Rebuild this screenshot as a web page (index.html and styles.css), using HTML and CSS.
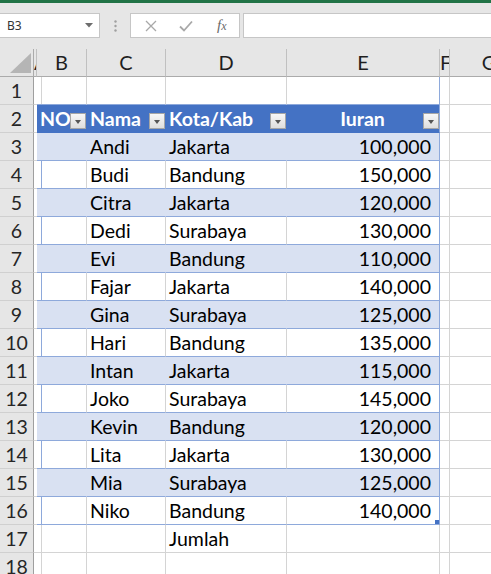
FILE: index.html
```html
<!DOCTYPE html>
<html lang="id">
<head>
    <meta charset="UTF-8">
    <title>Iuran</title>
    <link rel="stylesheet" href="styles.css">
</head>
<body>
    <div class="ribbon-edge"></div>

    <!-- formula bar -->
    <div class="fbar">
        <div class="namebox">
            <span>B3</span>
            <svg class="caret" width="8" height="5" viewBox="0 0 8 5"><path d="M0 0h8L4 4.5z" fill="#6d6d6d"/></svg>
        </div>
        <div class="grip">
            <svg width="3" height="12" viewBox="0 0 3 12"><circle cx="1.5" cy="1.5" r="1.2" fill="#a0a0a0"/><circle cx="1.5" cy="6" r="1.2" fill="#a0a0a0"/><circle cx="1.5" cy="10.5" r="1.2" fill="#a0a0a0"/></svg>
        </div>
        <div class="fxbox">
            <svg width="12" height="12" viewBox="0 0 12 12"><path d="M1 1l10 10M11 1L1 11" stroke="#a8a8a8" stroke-width="1.3" fill="none"/></svg>
            <svg width="14" height="12" viewBox="0 0 14 12"><path d="M1 6.5l4 4L13 1.5" stroke="#a8a8a8" stroke-width="1.8" fill="none"/></svg>
            <span class="fx"><i>f</i><i class="x">x</i></span>
        </div>
        <div class="formula"></div>
    </div>

    <div class="viewport">
    <div class="sheet">
        <div class="row colhdr">
            <div class="corner">
                <svg width="21" height="20" viewBox="0 0 21 20"><path d="M21 0V20H0z" fill="#b5b5b5"/></svg>
            </div>
            <div class="ch">A</div>
            <div class="ch">B</div>
            <div class="ch">C</div>
            <div class="ch">D</div>
            <div class="ch">E</div>
            <div class="ch">F</div>
            <div class="ch">G</div>
        </div>

        <div class="row above">
            <div class="rh">1</div><div class="c"></div>
            <div class="c t"></div><div class="c t"></div><div class="c t"></div><div class="c t last"></div>
            <div class="c"></div><div class="c"></div>
        </div>

        <div class="row head">
            <div class="rh">2</div><div class="c a"></div>
            <div class="c t">NO<span class="filter"></span></div>
            <div class="c t">Nama<span class="filter"></span></div>
            <div class="c t">Kota/Kab<span class="filter"></span></div>
            <div class="c t last mid">Iuran<span class="filter"></span></div>
            <div class="c"></div><div class="c"></div>
        </div>

        <div class="row band">
            <div class="rh">3</div><div class="c a"></div>
            <div class="c t"></div><div class="c t">Andi</div><div class="c t">Jakarta</div><div class="c t last num">100,000</div>
            <div class="c"></div><div class="c"></div>
        </div>
        <div class="row plain">
            <div class="rh">4</div><div class="c a"></div>
            <div class="c t"></div><div class="c t">Budi</div><div class="c t">Bandung</div><div class="c t last num">150,000</div>
            <div class="c"></div><div class="c"></div>
        </div>
        <div class="row band">
            <div class="rh">5</div><div class="c a"></div>
            <div class="c t"></div><div class="c t">Citra</div><div class="c t">Jakarta</div><div class="c t last num">120,000</div>
            <div class="c"></div><div class="c"></div>
        </div>
        <div class="row plain">
            <div class="rh">6</div><div class="c a"></div>
            <div class="c t"></div><div class="c t">Dedi</div><div class="c t">Surabaya</div><div class="c t last num">130,000</div>
            <div class="c"></div><div class="c"></div>
        </div>
        <div class="row band">
            <div class="rh">7</div><div class="c a"></div>
            <div class="c t"></div><div class="c t">Evi</div><div class="c t">Bandung</div><div class="c t last num">110,000</div>
            <div class="c"></div><div class="c"></div>
        </div>
        <div class="row plain">
            <div class="rh">8</div><div class="c a"></div>
            <div class="c t"></div><div class="c t">Fajar</div><div class="c t">Jakarta</div><div class="c t last num">140,000</div>
            <div class="c"></div><div class="c"></div>
        </div>
        <div class="row band">
            <div class="rh">9</div><div class="c a"></div>
            <div class="c t"></div><div class="c t">Gina</div><div class="c t">Surabaya</div><div class="c t last num">125,000</div>
            <div class="c"></div><div class="c"></div>
        </div>
        <div class="row plain">
            <div class="rh">10</div><div class="c a"></div>
            <div class="c t"></div><div class="c t">Hari</div><div class="c t">Bandung</div><div class="c t last num">135,000</div>
            <div class="c"></div><div class="c"></div>
        </div>
        <div class="row band">
            <div class="rh">11</div><div class="c a"></div>
            <div class="c t"></div><div class="c t">Intan</div><div class="c t">Jakarta</div><div class="c t last num">115,000</div>
            <div class="c"></div><div class="c"></div>
        </div>
        <div class="row plain">
            <div class="rh">12</div><div class="c a"></div>
            <div class="c t"></div><div class="c t">Joko</div><div class="c t">Surabaya</div><div class="c t last num">145,000</div>
            <div class="c"></div><div class="c"></div>
        </div>
        <div class="row band">
            <div class="rh">13</div><div class="c a"></div>
            <div class="c t"></div><div class="c t">Kevin</div><div class="c t">Bandung</div><div class="c t last num">120,000</div>
            <div class="c"></div><div class="c"></div>
        </div>
        <div class="row plain">
            <div class="rh">14</div><div class="c a"></div>
            <div class="c t"></div><div class="c t">Lita</div><div class="c t">Jakarta</div><div class="c t last num">130,000</div>
            <div class="c"></div><div class="c"></div>
        </div>
        <div class="row band">
            <div class="rh">15</div><div class="c a"></div>
            <div class="c t"></div><div class="c t">Mia</div><div class="c t">Surabaya</div><div class="c t last num">125,000</div>
            <div class="c"></div><div class="c"></div>
        </div>
        <div class="row plain">
            <div class="rh">16</div><div class="c a"></div>
            <div class="c t"></div><div class="c t">Niko</div><div class="c t">Bandung</div><div class="c t last num">140,000<span class="handle"></span></div>
            <div class="c"></div><div class="c"></div>
        </div>

        <div class="row">
            <div class="rh">17</div><div class="c"></div>
            <div class="c"></div><div class="c"></div><div class="c">Jumlah</div><div class="c"></div>
            <div class="c"></div><div class="c"></div>
        </div>
        <div class="row">
            <div class="rh">18</div><div class="c"></div>
            <div class="c"></div><div class="c"></div><div class="c"></div><div class="c"></div>
            <div class="c"></div><div class="c"></div>
        </div>
    </div>
    </div>
</body>
</html>
```

FILE: styles.css
```css
body {
    margin: 0;
    width: 491px;
    height: 574px;
    overflow: hidden;
    background: #ffffff;
    font-family: Lato, "Open Sans", sans-serif;
}
.ribbon-edge {
    height: 3px;
    background: #217346;
}

/* formula bar */
.fbar {
    display: flex;
    height: 46px;
    padding-top: 10px;
    box-sizing: border-box;
    background: #e6e6e6;
}
.namebox,
.fxbox,
.formula {
    height: 25px;
    box-sizing: border-box;
    background: #ffffff;
    border: 1px solid #c6c6c6;
}
.namebox {
    width: 101px;
    margin-left: -1px;
    display: flex;
    align-items: center;
    justify-content: space-between;
    padding: 0 6px 0 7px;
    font-family: "Noto Sans", sans-serif;
    font-size: 12px;
    color: #333333;
}
.grip {
    width: 30px;
    display: flex;
    align-items: center;
    justify-content: center;
    height: 25px;
}
.fxbox {
    width: 110px;
    display: flex;
    align-items: center;
    padding-left: 14px;
    gap: 22px;
}
.fx {
    font-family: "Liberation Serif", serif;
    font-size: 15px;
    color: #6a6a6a;
    margin-left: 2px;
}
.fx .x {
    font-size: 12px;
}
.formula {
    flex: 1;
    margin-left: 3px;
    margin-right: -1px;
}

/* grid */
.viewport {
    width: 491px;
    overflow: hidden;
}
.sheet {
    width: 529px;
}
.row {
    display: grid;
    grid-template-columns: 34px 3px 50px 79px 121px 153px 10px 79px;
    height: 28px;
    font-size: 19.5px;
    color: #000000;
}
.row > div {
    box-sizing: border-box;
    overflow: hidden;
    white-space: nowrap;
}
.colhdr {
    background: #e6e6e6;
}
.corner {
    border-right: 1px solid #ababab;
    border-bottom: 1px solid #ababab;
    padding: 4px 0 0 10px;
}
.ch {
    border-right: 1px solid #c0c0c0;
    border-bottom: 1px solid #ababab;
    text-align: center;
    line-height: 27px;
    font-size: 20px;
    color: #1f1f1f;
}
.rh {
    background: #e6e6e6;
    border-right: 1px solid #9f9f9f;
    border-bottom: 1px solid #d0d0d0;
    text-align: center;
    line-height: 27px;
    color: #262626;
}
.c {
    position: relative;
    border-right: 1px solid #d4d4d4;
    border-bottom: 1px solid #d4d4d4;
    padding: 0 4px 0 3px;
    line-height: 27px;
}

/* table styling */
.above .t {
    border-bottom-color: #8ea9db;
}
.head .a,
.band .a,
.plain .a {
    border-right-color: #8ea9db;
}
.head .t {
    background: #4472c4;
    border-right-color: #4472c4;
    border-bottom-color: #4472c4;
    color: #ffffff;
    font-weight: bold;
}
.band .t {
    background: #d9e1f2;
    border-right-color: #d9e1f2;
    border-bottom-color: #8ea9db;
}
.plain .t {
    border-bottom-color: #8ea9db;
}
.row .t.last {
    border-right-color: #8ea9db;
}
.mid {
    text-align: center;
}
.num {
    text-align: right;
    padding-right: 8px;
}
.filter {
    position: absolute;
    right: 0;
    top: 8px;
    width: 16px;
    height: 16px;
    box-sizing: border-box;
    border: 1px solid #a6a6a6;
    background: linear-gradient(#f7f7f7, #dedede);
}
.filter::after {
    content: "";
    position: absolute;
    left: 4px;
    top: 6px;
    border-left: 3.5px solid transparent;
    border-right: 3.5px solid transparent;
    border-top: 4px solid #555555;
}
.handle {
    position: absolute;
    right: -1px;
    bottom: -1px;
    width: 5px;
    height: 5px;
    background: #4472c4;
}
```
